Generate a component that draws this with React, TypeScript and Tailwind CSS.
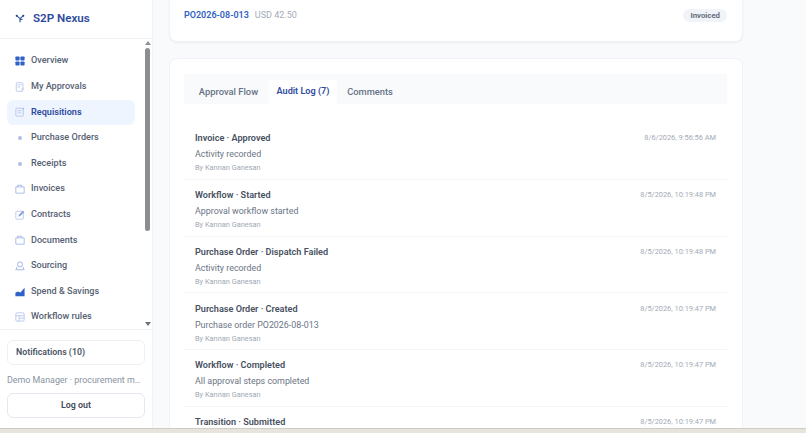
import type { ReactNode } from "react";

const Svg = ({ children }: { children: ReactNode }) => (
  <svg viewBox="0 0 12 12" className="w-[10px] h-[10px] shrink-0" fill="none">
    {children}
  </svg>
);

const stroke = { stroke: "#b4c2ea", strokeWidth: 1 };

const icons: Record<string, ReactNode> = {
  grid: (
    <Svg>
      <rect x="0.5" y="0.5" width="5" height="5" rx="1" fill="#2f62c9" />
      <rect x="6.5" y="0.5" width="5" height="5" rx="1" fill="#2f62c9" />
      <rect x="0.5" y="6.5" width="5" height="5" rx="1" fill="#2f62c9" />
      <rect x="6.5" y="6.5" width="5" height="5" rx="1" fill="#2f62c9" />
    </Svg>
  ),
  approvals: (
    <Svg>
      <rect x="1.5" y="0.8" width="8" height="10.4" rx="1" {...stroke} />
      <path d="M3 3.5h5M3 6h3M7 8l1.2 1.2L10.8 7" {...stroke} />
    </Svg>
  ),
  req: (
    <Svg>
      <rect x="1" y="1.5" width="9" height="9.5" rx="1" {...stroke} />
      <path d="M3 4.5h5M3 7h5" {...stroke} />
      <circle cx="10" cy="2" r="1" fill="#a9b9e6" />
    </Svg>
  ),
  dot: (
    <Svg>
      <rect x="4" y="4" width="4" height="4" rx="0.8" fill="#a9b9e6" />
    </Svg>
  ),
  folder: (
    <Svg>
      <path d="M1 3.5h10v7.5H1z" stroke="#9db1e4" strokeWidth="1" />
      <path d="M3 3.5V1.5h5v2" stroke="#9db1e4" strokeWidth="1" />
    </Svg>
  ),
  contract: (
    <Svg>
      <rect x="1" y="1.5" width="9" height="9.5" rx="1" {...stroke} />
      <path d="M4 8l1-2.5L9.5 1l1.5 1.5L6.5 7z" fill="#7f99dd" />
    </Svg>
  ),
  sourcing: (
    <Svg>
      <circle cx="6" cy="4" r="3" stroke="#8fa6e0" strokeWidth="1" />
      <path d="M1 11l1.5-4M11 11L9.5 7M2 10.5h8" stroke="#8fa6e0" strokeWidth="1" />
    </Svg>
  ),
  spend: (
    <Svg>
      <path d="M0.5 11V7l3-1.5 3 1 5-5.5V11z" fill="#2f62c9" />
    </Svg>
  ),
  workflow: (
    <Svg>
      <rect x="1" y="1" width="10" height="10" rx="1.5" {...stroke} />
      <path d="M1 4.5h10M5 4.5V11M5 7.5h6" {...stroke} />
    </Svg>
  ),
};

const navItems = [
  ["Overview", "grid"],
  ["My Approvals", "approvals"],
  ["Requisitions", "req"],
  ["Purchase Orders", "dot"],
  ["Receipts", "dot"],
  ["Invoices", "folder"],
  ["Contracts", "contract"],
  ["Documents", "folder"],
  ["Sourcing", "sourcing"],
  ["Spend & Savings", "spend"],
  ["Workflow rules", "workflow"],
];

const auditRows = [
  ["Invoice · Approved", "Activity recorded", "8/6/2026, 9:56:56 AM"],
  ["Workflow · Started", "Approval workflow started", "8/5/2026, 10:19:48 PM"],
  ["Purchase Order · Dispatch Failed", "Activity recorded", "8/5/2026, 10:19:48 PM"],
  ["Purchase Order · Created", "Purchase order PO2026-08-013", "8/5/2026, 10:19:47 PM"],
  ["Workflow · Completed", "All approval steps completed", "8/5/2026, 10:19:47 PM"],
  ["Transition · Submitted", "", "8/5/2026, 10:19:47 PM"],
];

const Sidebar = () => (
  <aside className="w-[153px] shrink-0 h-full bg-white border-r border-[#f1f3f7] flex flex-col">
    <div className="h-[39px] shrink-0 border-b border-[#f1f3f7] flex items-center pl-[15px] gap-[8px]">
      <svg viewBox="0 0 12 12" className="w-[10px] h-[10px] shrink-0" fill="none">
        <path d="M2 2l4 3.5L10 2M6 5.5V10M6 6.5h3" stroke="#3056a8" strokeWidth="1.4" />
        <circle cx="2" cy="2" r="1.2" fill="#1e3a8a" />
        <circle cx="10" cy="2" r="1.2" fill="#1e3a8a" />
      </svg>
      <span className="text-[11.6px] leading-none font-semibold text-[#2f4a9e]">S2P Nexus</span>
    </div>
    <div className="h-[290px] shrink-0 flex">
      <nav className="flex-1 flex flex-col pl-[7px] pr-[5px] pt-[9.5px]">
        {navItems.map(([label, icon]) => {
          const active = label === "Requisitions";
          return (
            <div
              key={label}
              className={`h-[25.6px] shrink-0 rounded-md flex items-center gap-[6px] pl-[8px] text-[9.1px] font-medium ${
                active ? "bg-[#eff5fe] text-[#2f4a9e] font-semibold" : "text-[#566072]"
              }`}
            >
              {icons[icon]}
              <span>{label}</span>
            </div>
          );
        })}
      </nav>
      <div className="w-[9px] ml-[3px] shrink-0 flex flex-col items-center pt-[2px]">
        <div className="w-0 h-0 border-x-[3px] border-x-transparent border-b-[4px] border-b-[#8b8f96]" />
        <div className="w-[5px] h-[183px] mt-[3px] rounded-full bg-[#8a8d92]" />
        <div className="mt-auto mb-[3px] w-0 h-0 border-x-[3px] border-x-transparent border-t-[4px] border-t-[#6f7277]" />
      </div>
    </div>
    <div className="flex-1 border-t border-[#f1f3f7] px-[7px] pt-[10px]">
      <div className="h-[25px] rounded-md border border-[#eef0f4] flex items-center pl-[8px] text-[8.8px] font-semibold text-[#4b5565]">
        Notifications (10)
      </div>
      <div className="mt-[9px] text-[8.9px] leading-[13px] text-[#8a93a2] truncate w-[138px]">
        Demo Manager · procurement manager
      </div>
      <div className="mt-[6px] h-[25px] rounded-md border border-[#e5e8ee] flex items-center justify-center text-[8.9px] font-semibold text-[#3f4856]">
        Log out
      </div>
    </div>
  </aside>
);

const AuditRow = ({ row, last }: { row: string[]; last: boolean }) => (
  <div className={`h-[56.8px] shrink-0 flex justify-between px-[11px] pt-[7.3px] ${last ? "" : "border-b border-[#f3f4f7]"}`}>
    <div>
      <div className="text-[9.1px] leading-[16px] font-semibold text-[#465060]">{row[0]}</div>
      {!last && (
        <>
          <div className="text-[8.9px] leading-[16px] text-[#6b7585]">{row[1]}</div>
          <div className="text-[7.4px] leading-[12px] text-[#a0a8b4]">By Kannan Ganesan</div>
        </>
      )}
    </div>
    <div className="text-[7.4px] leading-[16px] text-[#a3abb7]">{row[2]}</div>
  </div>
);

export default function App() {
  return (
    <div className="w-[806px] h-[433px] overflow-hidden flex flex-col bg-[#f8fafc] font-['Roboto',sans-serif]">
      <div className="h-[428px] shrink-0 flex overflow-hidden">
        <Sidebar />
        <main className="flex-1 overflow-hidden pl-[16px] pr-[63px]">
          <div className="-mt-[11px] h-[53px] rounded-lg bg-white border border-[#f1f3f7] shadow-[0_1px_2px_rgba(15,23,42,0.05)] flex items-center justify-between pl-[14px] pr-[15px]">
            <div className="flex items-center gap-[6px]">
              <span className="text-[9px] font-semibold text-[#2f5fc4]">PO2026-08-013</span>
              <span className="text-[9px] text-[#a3abb7]">USD 42.50</span>
            </div>
            <span className="h-[13px] px-[7px] rounded-full bg-[#f0f3f7] flex items-center text-[7.8px] font-semibold text-[#5a6473]">
              Invoiced
            </span>
          </div>
          <div className="mt-[16px] h-[420px] rounded-lg bg-white border border-[#f1f3f7] pl-[14px] pr-[15px] pt-[15px]">
            <div className="h-[30px] bg-[#f8fafc] flex items-end pl-[4px]">
              <div className="h-[24px] w-[81px] flex items-center justify-center text-[9.4px] font-medium text-[#677284]">
                Approval Flow
              </div>
              <div className="h-[24px] w-[68px] bg-white flex items-center justify-center text-[9.1px] font-semibold text-[#2f4a9e]">
                Audit Log (7)
              </div>
              <div className="h-[24px] w-[66px] flex items-center justify-center text-[9.3px] font-medium text-[#677284]">
                Comments
              </div>
            </div>
            <div className="mt-[19px] flex flex-col">
              {auditRows.map((row, i) => (
                <AuditRow key={row[0]} row={row} last={i === auditRows.length - 1} />
              ))}
            </div>
          </div>
        </main>
      </div>
      <div className="flex-1 bg-[#e6e4dc] border-t border-[#cfcdc5]" />
    </div>
  );
}
